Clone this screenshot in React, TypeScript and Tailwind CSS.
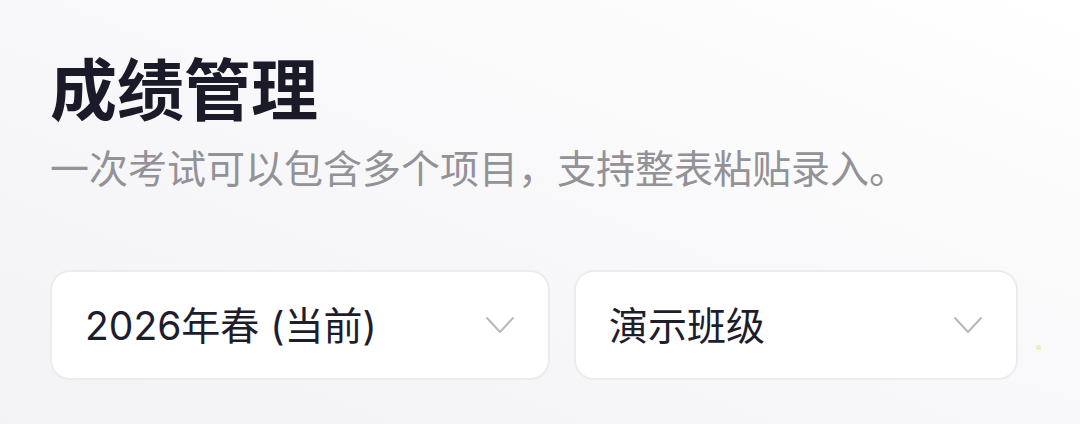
const font = { fontFamily: '"Noto Sans CJK SC", "Noto Sans", sans-serif' };
const selectFont = { fontFamily: 'Inter, "Noto Sans CJK SC", sans-serif' };

function Chevron() {
  return (
    <svg width="30" height="20" viewBox="0 0 30 20" fill="none" className="shrink-0">
      <polyline
        points="2,3 15,17 28,3"
        stroke="#b8b8bc"
        strokeWidth="2"
        strokeLinecap="round"
        strokeLinejoin="round"
      />
    </svg>
  );
}

function Select({ label, className }: { label: string; className: string }) {
  return (
    <div
      className={`flex h-[110px] items-center justify-between rounded-[20px] border-2 border-[#ececf0] bg-white pl-[33px] pr-[33px] ${className}`}
    >
      <span className="text-[39px] leading-none text-[#1e1d2b]" style={selectFont}>
        {label}
      </span>
      <Chevron />
    </div>
  );
}

export default function App() {
  return (
    <div
      className="relative h-[424px] w-[1080px] overflow-hidden bg-gradient-to-bl from-[#ffffff] via-[#f8f8fa] to-[#f3f3f6] px-[50px] pt-[48px]"
      style={font}
    >
      <h1 className="text-[67px] font-bold leading-[76px] text-[#1b1a28]">成绩管理</h1>
      <p className="mt-[17px] text-[39px] leading-[50px] text-[#929297]">
        一次考试可以包含多个项目，支持整表粘贴录入。
      </p>
      <div className="mt-[79px] flex gap-[24px]">
        <Select label="2026年春 (当前)" className="w-[500px]" />
        <Select label="演示班级" className="w-[444px]" />
      </div>
      <span className="absolute left-[1036px] top-[345px] h-[5px] w-[5px] rounded-full bg-[#f0eeb0]" />
    </div>
  );
}
